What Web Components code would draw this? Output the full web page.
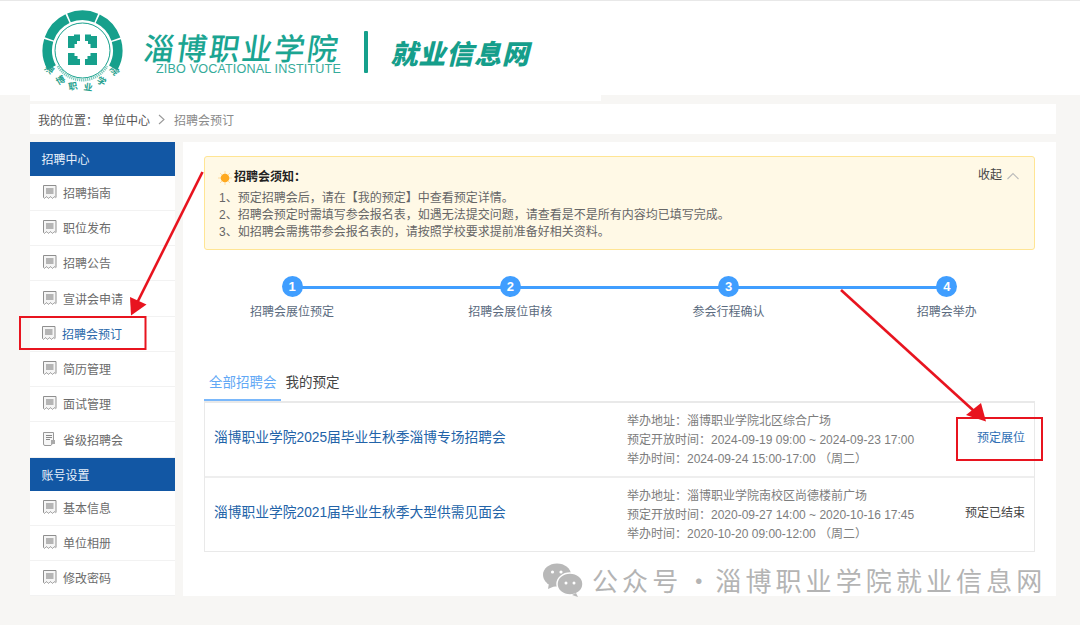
<!DOCTYPE html>
<html lang="zh"><head><meta charset="utf-8"><title>招聘会预订</title>
<style>
html,body{margin:0;padding:0;background:#f7f6f4;font:12px "Liberation Sans","Noto Sans CJK SC",sans-serif;color:#666}
body{width:1080px;height:625px;overflow:hidden}
</style></head><body>
<zb-app>
  <zb-header></zb-header>
  <zb-crumbs></zb-crumbs>
  <zb-main>
    <zb-side>
      <zb-side-head>招聘中心</zb-side-head>
      <zb-side-item>招聘指南</zb-side-item>
      <zb-side-item>职位发布</zb-side-item>
      <zb-side-item>招聘公告</zb-side-item>
      <zb-side-item>宣讲会申请</zb-side-item>
      <zb-side-item active>招聘会预订</zb-side-item>
      <zb-side-item>简历管理</zb-side-item>
      <zb-side-item>面试管理</zb-side-item>
      <zb-side-item fold>省级招聘会</zb-side-item>
      <zb-side-head>账号设置</zb-side-head>
      <zb-side-item>基本信息</zb-side-item>
      <zb-side-item>单位相册</zb-side-item>
      <zb-side-item>修改密码</zb-side-item>
    </zb-side>
    <zb-content>
      <zb-notice></zb-notice>
      <zb-steps></zb-steps>
      <zb-tabs></zb-tabs>
      <zb-table>
        <zb-row addr="淄博职业学院北区综合广场" open="2024-09-19 09:00 ~ 2024-09-23 17:00" hold="2024-09-24 15:00-17:00 （周二）" action="预定展位" link>淄博职业学院2025届毕业生秋季淄博专场招聘会</zb-row>
        <zb-row addr="淄博职业学院南校区尚德楼前广场" open="2020-09-27 14:00 ~ 2020-10-16 17:45" hold="2020-10-20 09:00-12:00 （周二）" action="预定已结束">淄博职业学院2021届毕业生秋季大型供需见面会</zb-row>
      </zb-table>
    </zb-content>
  </zb-main>
  <zb-watermark></zb-watermark>
  <zb-marks></zb-marks>
</zb-app>
<script>
function el(name, html){
  class C extends HTMLElement{
    constructor(){super();this.attachShadow({mode:'open'}).innerHTML=typeof html==='function'?html(this):html;}
  }
  customElements.define(name,C);
}
const seg=(a0,a1,r0,r1,cx,cy)=>{
  const p=(a,r)=>{const t=a*Math.PI/180;return (cx+r*Math.sin(t)).toFixed(2)+' '+(cy-r*Math.cos(t)).toFixed(2)};
  return `M${p(a0,r1)}A${r1} ${r1} 0 0 1 ${p(a1,r1)}L${p(a1,r0)}A${r0} ${r0} 0 0 0 ${p(a0,r0)}Z`;
};
el('zb-app',`<style>:host{display:block;position:relative;width:1080px;height:625px;overflow:hidden}</style><slot></slot>`);
el('zb-header',()=>{
  let segs='';
  const cx=82.5,cy=50.5;
  for(let i=0;i<5;i++){const a=-119+i*48.2;segs+=`<path d="${seg(a,a+45.6,30.5,40,cx,cy)}"/>`;}
  const Q='M-14.5-14.5H-8.5V-16H-2.5V-9.5H-5.5V-6.5H-8V-2.5H-14.5Z';
  const Q2='M-14.5 14.5H-2.5V8.5H-5V5.5H-8V2.5H-14.5Z';
  const q=`<path d="${Q}"/><path d="${Q}" transform="scale(-1 1)"/><path d="${Q2}"/><path d="${Q2}" transform="scale(-1 1)"/>`;
  const cs=[['淄',50,70,-55],['博',61,81,-30],['职',73,87,-10],['业',88,88,8],['学',101,82,28],['院',114,71,52]];
  const chars=cs.map(c=>`<text x="0" y="0" transform="translate(${c[1]} ${c[2]}) rotate(${c[3]})" text-anchor="middle" dominant-baseline="middle">${c[0]}</text>`).join('');
  return `<style>
  :host{display:block;height:95px;background:#fff;border-top:1px solid #e8e8e8;box-sizing:border-box}
  .logo{width:571px;height:100px;margin-left:30px;background:#fff;display:flex;align-items:flex-start;color:#16a08c;position:relative}
  svg{display:block;margin-left:12px;flex:none}
  .name{margin-left:20px;margin-top:31px;width:198px;display:flex;flex-direction:column;align-items:flex-start}
  .cn{font:500 30.5px/30px "Noto Sans CJK SC",sans-serif;letter-spacing:2.2px;margin-left:-2px;white-space:nowrap;transform:skewX(-8deg);transform-origin:0 100%;color:#1ba592}
  .en{font:12.6px/12px "Liberation Sans",sans-serif;margin:1px 0 0 12px;letter-spacing:.15px;white-space:nowrap;color:#35ab9a}
  .bar{width:3.5px;height:42px;background:#16a08c;margin:30px 0 0 22px;border-radius:1px;flex:none}
  .title{font:900 27px/30px "Noto Sans CJK SC",sans-serif;font-style:italic;letter-spacing:.8px;margin:37px 0 0 23px;color:#159e8b;white-space:nowrap}
  </style><div class="logo"><svg width="82" height="94" viewBox="42 1 82 94" fill="#16a08c">${segs}
  <circle cx="${cx}" cy="${cy}" r="27.5" fill="none" stroke="#16a08c" stroke-width="1"/>
  <path d="M58 66A28.5 28.5 0 0 0 107 66" fill="none" stroke="#7ccabd" stroke-width="3" stroke-dasharray="1.2 .8"/>
  <g transform="translate(${cx} ${cy})">${q}</g>
  <g font-family="Noto Sans CJK SC,sans-serif" font-size="9" font-weight="700" fill="#1f9f8d">${chars}</g></svg>
  <div class="name"><div class="cn">淄博职业学院</div><div class="en">ZIBO VOCATIONAL INSTITUTE</div></div>
  <div class="bar"></div><div class="title">就业信息网</div></div>`;
});
el('zb-crumbs',`<style>
:host{display:flex;align-items:center;height:30px;margin:9px 24px 0 30px;background:#fff;padding-left:8px;color:#555;font-size:12px;box-sizing:border-box}
b{font-weight:400;margin-left:4px}
svg{margin:1px 9px 0 8px}
i{font-style:normal;color:#8a8a8a}
</style><span>我的位置：</span><b>单位中心</b><svg width="7" height="11" viewBox="0 0 7 11"><path d="M1 1l5 4.5L1 10" fill="none" stroke="#999" stroke-width="1.1"/></svg><i>招聘会预订</i>`);
el('zb-main',`<style>:host{display:flex;gap:8px;margin:8px 24px 0 30px;height:454px}</style><slot></slot>`);
el('zb-side',`<style>:host{display:block;width:145px;flex:none;background:#fff}</style><slot></slot>`);
el('zb-side-head',`<style>:host{display:flex;align-items:center;height:33px;margin-left:-.5px;background:#1257a4;color:#e8f0fa;padding-left:12px;font-size:12px;box-sizing:border-box}
:host(:first-child){height:33.7px}</style><slot></slot>`);
el('zb-side-item',h=>{
  const fold=h.hasAttribute('fold'),a=h.hasAttribute('active');
  const icon=fold?
  `<path d="M.5.5H10.5V10L8 13.5H2Q.5 13.5 .5 12Z" fill="#f6f6f6" stroke="#999"/><path d="M3 3.5H9M3 5.5H9M3 7.5H7" stroke="#888"/><rect x="8" y="8" width="4" height="4" fill="#aaa"/>`:
  `<path d="M.5 12.5V.5H13V12.5" fill="#f5f5f5" stroke="#8f8f8f"/><path d="M3 4H10.5M3 6H10.5M3 8H10.5" stroke="#777" stroke-width="1.1"/><path d="M.5 12.5q1 1.6 2 0t2 0t2 0t2 0t2 0t2 .2" fill="none" stroke="#8f8f8f"/>`;
  return `<style>
  :host{display:flex;align-items:center;height:35.25px;box-sizing:border-box;border-bottom:1.7px solid #f2f2f2;padding:0 0 1px 13px;gap:6px;font-size:12px;color:${a?'#2a68ab':'#6b6b6b'};background:#fff}
  svg{flex:none;${a?'margin-left:-1px;':''}}
  </style><svg width="14" height="15" viewBox="0 0 14 15">${icon}</svg><slot></slot>`;
});
el('zb-content',`<style>:host{display:block;flex:1;background:#fff;padding:14px 21px 0;box-sizing:border-box;min-width:0}</style><slot></slot>`);
el('zb-notice',`<style>
:host{display:block;height:94px;box-sizing:border-box;background:#fff9e6;border:1px solid #ffe594;border-radius:3px;padding:11px 14px 0;position:relative;color:#666;font-size:12px;line-height:17px}
.t{display:flex;align-items:center;color:#222;font-weight:700;height:19px;margin-bottom:3px}
.t svg{margin-left:-1px;margin-right:2px}
.c{position:absolute;right:15px;top:10px;display:flex;align-items:center;gap:5px;color:#444}
</style><div class="t"><svg width="14" height="14" viewBox="0 0 14 14"><g stroke="#ffdca0" stroke-width="1"><path d="M7 0V14M0 7H14M2 2L12 12M12 2L2 12"/></g><circle cx="7" cy="7" r="4.3" fill="#ffa91f"/></svg>招聘会须知：</div>
<div>1、预定招聘会后，请在【我的预定】中查看预定详情。</div>
<div>2、招聘会预定时需填写参会报名表，如遇无法提交问题，请查看是不是所有内容均已填写完成。</div>
<div>3、如招聘会需携带参会报名表的，请按照学校要求提前准备好相关资料。</div>
<div class="c"><span>收起</span><svg width="12" height="8" viewBox="0 0 12 8"><path d="M.5 7L6 1.5 11.5 7" fill="none" stroke="#bbb" stroke-width="1.1"/></svg></div>`);
el('zb-steps',()=>{
  const l=['招聘会展位预定','招聘会展位审核','参会行程确认','招聘会举办'];
  return `<style>
  :host{display:grid;grid-template-columns:repeat(4,1fr);margin:26px -21px 0;position:relative;height:44px}
  :host::before{content:"";position:absolute;left:12.5%;right:12.5%;top:10px;height:3px;background:#409eff}
  .s{display:flex;flex-direction:column;align-items:center;position:relative}
  .n{width:21px;height:21px;border-radius:50%;background:#409eff;color:#fff;font-size:13px;font-weight:700;line-height:21px;text-align:center}
  .l{margin-top:7px;line-height:17px;color:#5b6b80;font-size:12px}
  </style>`+l.map((t,i)=>`<div class="s"><div class="n">${i+1}</div><div class="l">${t}</div></div>`).join('');
});
el('zb-tabs',`<style>
:host{display:flex;margin-top:46px;height:35px;font-size:13.5px;line-height:18px;box-sizing:border-box}
span{padding:8px 4px 7px 5px;color:#444;height:18px}
.a{color:#62a8f5;border-bottom:2px solid #7ab8fb}
</style><span class="a">全部招聘会</span><span>我的预定</span>`);
el('zb-table',`<style>:host{display:block;border:solid #e9e9e9;border-width:2px 1px 1px;box-sizing:border-box;height:151px}</style><slot></slot>`);
el('zb-row',h=>{
  const g=n=>h.getAttribute(n);
  return `<style>
  :host{display:grid;grid-template-columns:422px 1fr auto;align-items:center;height:73px;box-sizing:content-box;padding-right:9px}
  :host(:first-child){border-bottom:2px solid #eee}
  .t{padding:0 0 8px 9px;font-size:13.75px;color:#2263a8;white-space:nowrap}
  .i{font-size:12px;line-height:19.2px;padding-top:2px;color:#7d7d7d;white-space:nowrap}
  .a{font-size:12px;padding-bottom:7px;color:${h.hasAttribute('link')?'#2f6fb5':'#444'}}
  </style><div class="t"><slot></slot></div><div class="i"><div>举办地址：${g('addr')}</div><div>预定开放时间：${g('open')}</div><div>举办时间：${g('hold')}</div></div><div class="a">${g('action')}</div>`;
});
el('zb-watermark',`<style>
:host{position:absolute;left:543px;top:562px;display:flex;align-items:center;color:#b0b0b0;font:26px/36px "Noto Sans CJK SC",sans-serif;letter-spacing:4.1px;white-space:nowrap;opacity:.95}
svg{margin-right:9px;flex:none}
.d{width:33px;text-align:center;letter-spacing:0}
</style><svg width="40" height="34" viewBox="0 0 40 34"><ellipse cx="14" cy="12" rx="14" ry="11.5" fill="#b5b5b5"/><path d="M6 20l-1 6 7-3z" fill="#b5b5b5"/><ellipse cx="27" cy="21" rx="13" ry="11" fill="#b5b5b5" stroke="#fff" stroke-width="1.5"/><path d="M33 30l2 4-6-2z" fill="#b5b5b5"/><circle cx="9.5" cy="9" r="1.6" fill="#fff"/><circle cx="18" cy="9" r="1.6" fill="#fff"/><circle cx="23" cy="20" r="1.5" fill="#fff"/><circle cx="31" cy="20" r="1.5" fill="#fff"/></svg><span>公众号</span><span class="d">·</span><span>淄博职业学院就业信息网</span>`);
el('zb-marks',`<style>:host{position:absolute;inset:0;pointer-events:none}svg{display:block}</style>
<svg width="1080" height="625" fill="none" stroke="#e8141f">
<rect x="20" y="317" width="125.5" height="32" stroke-width="2"/>
<rect x="957" y="418" width="85" height="42" stroke-width="2"/>
<path d="M202.5 172L137 303" stroke-width="2.6"/>
<path d="M131 315.5L130 297L146.5 304.5Z" fill="#e8141f" stroke="none"/>
<path d="M841 290L974 411" stroke-width="2.6"/>
<path d="M986 421.5L966 415L981 403Z" fill="#e8141f" stroke="none"/>
</svg>`);
</script>
</body></html>
